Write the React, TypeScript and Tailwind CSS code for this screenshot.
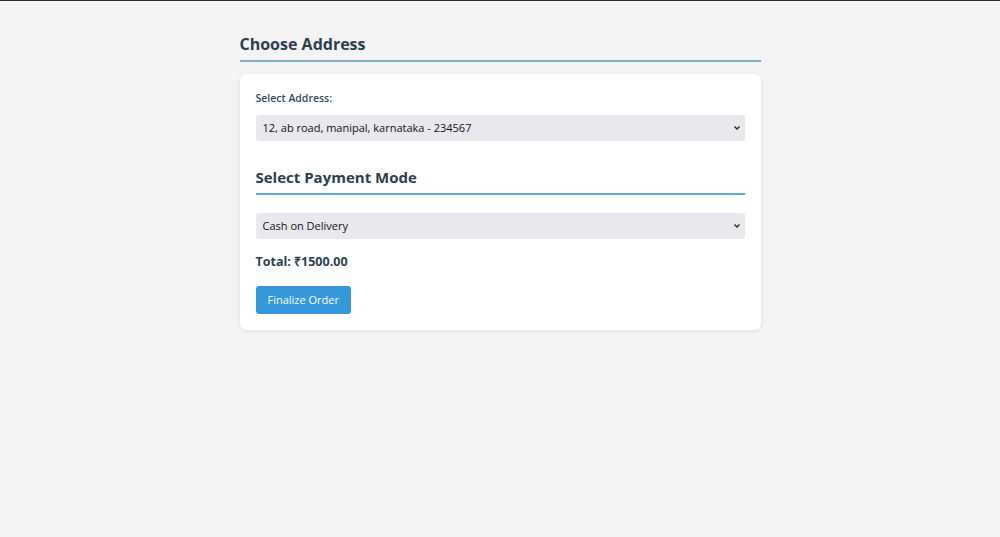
export default function App() {
  return (
    <div className="min-h-[537px] w-full border-t-[1.5px] border-[#2a2a2a] bg-[#f4f4f4] font-['Open_Sans',sans-serif] text-[#2c3e50]">
      <div className="mx-auto w-[521px] pt-[32px]">
        <h2 className="border-b-2 border-[#7fb1c4] pb-[5px] text-[16px] font-bold leading-[22px] text-[#2c3e50]">
          Choose Address
        </h2>
        <div className="mt-[12px] rounded-[6px] bg-white px-[16px] pt-[16px] pb-[16px] shadow-[0_1px_4px_rgba(0,0,0,0.1)]">
          <label className="block text-[10.5px] font-semibold leading-[16px] text-[#34495e]">
            Select Address:
          </label>
          <div className="relative mt-[9px] flex h-[26px] items-center rounded-[3px] bg-[#e9e9ed] px-[7px] text-[11px] text-[#111]">
            12, ab road, manipal, karnataka - 234567
            <svg className="absolute right-[4px] top-[9px]" width="8" height="8" viewBox="0 0 8 8">
              <path d="M1.5 2.5 L4 5 L6.5 2.5" fill="none" stroke="#222" strokeWidth="1.3" />
            </svg>
          </div>
          <h3 className="mt-[25px] border-b-2 border-[#5fa9d8] pb-[5px] text-[15px] font-bold leading-[22px] text-[#2c3e50]">
            Select Payment Mode
          </h3>
          <div className="relative mt-[18px] flex h-[26px] items-center rounded-[3px] bg-[#e9e9ed] px-[7px] text-[11px] text-[#111]">
            Cash on Delivery
            <svg className="absolute right-[4px] top-[9px]" width="8" height="8" viewBox="0 0 8 8">
              <path d="M1.5 2.5 L4 5 L6.5 2.5" fill="none" stroke="#222" strokeWidth="1.3" />
            </svg>
          </div>
          <p className="mt-[14px] text-[12.5px] font-bold leading-[18px] text-[#2c3e50]">
            Total: ₹1500.00
          </p>
          <button className="mt-[15px] h-[28px] rounded-[3px] bg-[#3498db] px-[12px] text-[11px] text-white">
            Finalize Order
          </button>
        </div>
      </div>
    </div>
  );
}
